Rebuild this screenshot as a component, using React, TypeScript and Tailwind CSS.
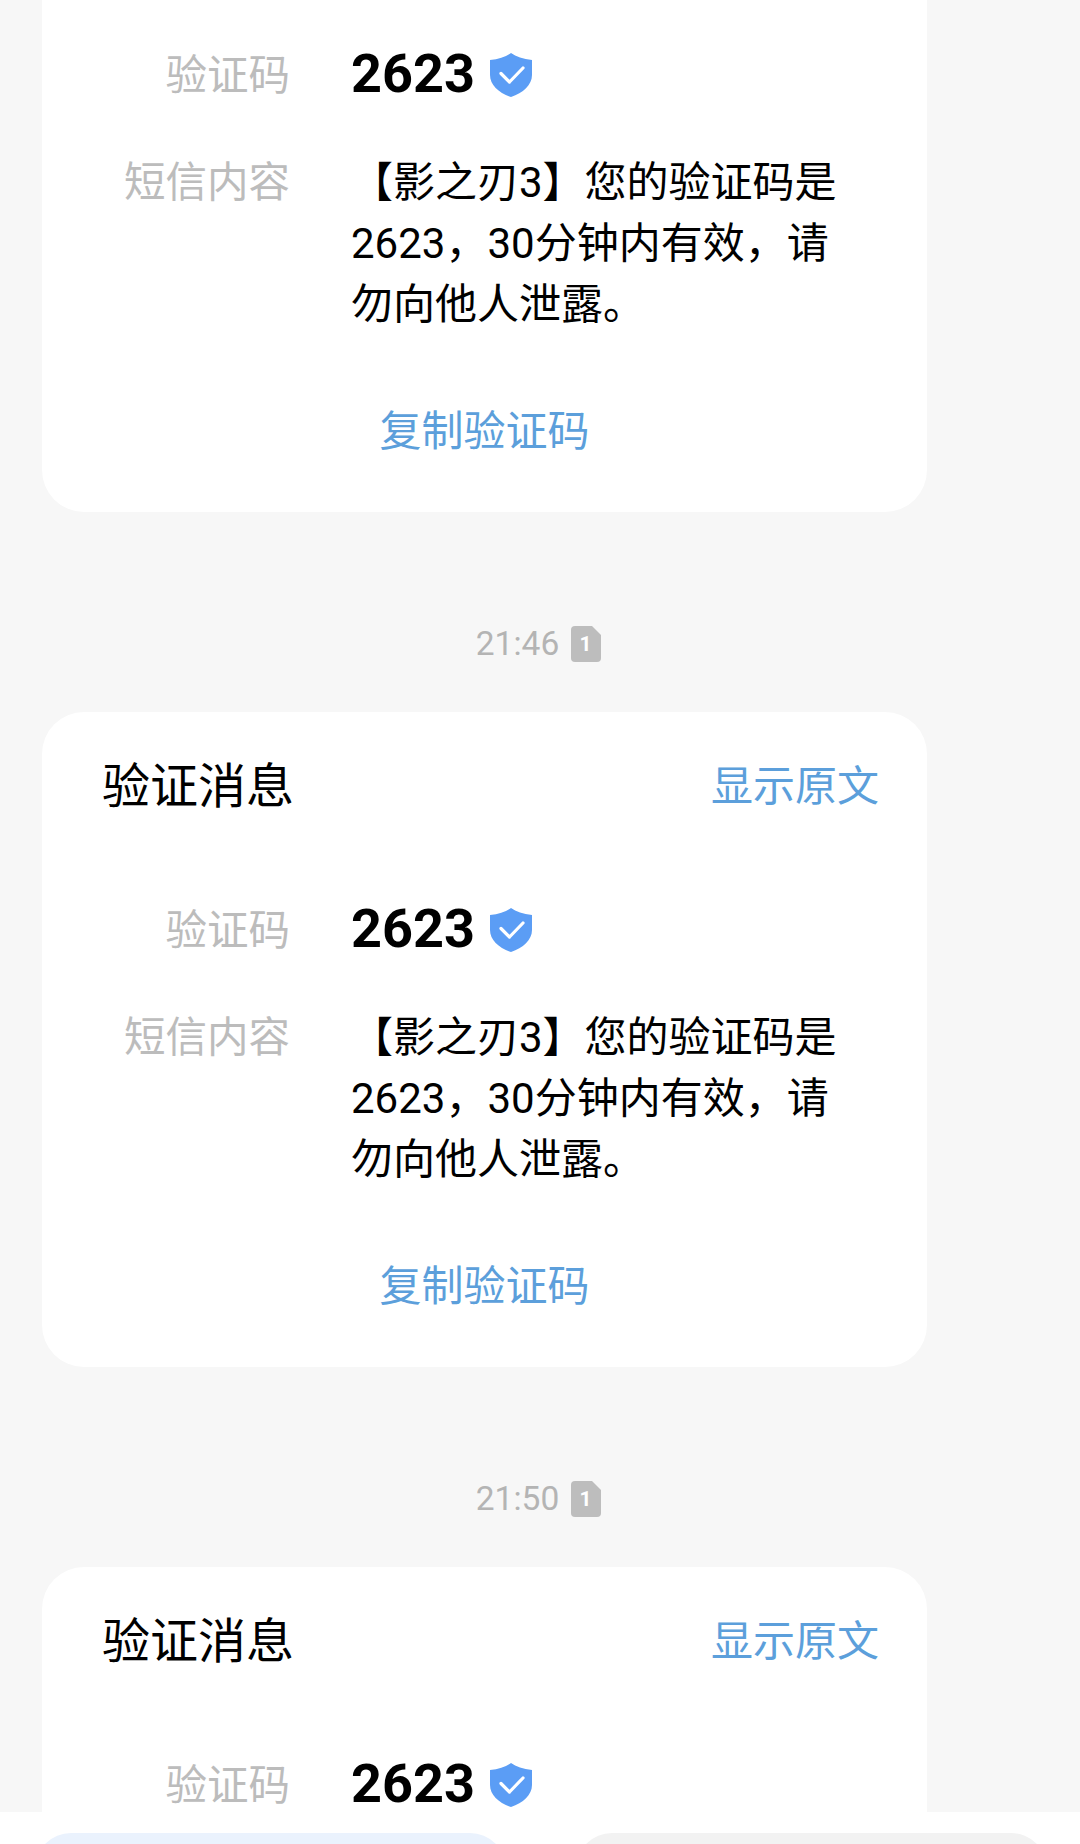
const cjk = "font-['Roboto','Noto_Sans_CJK_SC',sans-serif]";

function Shield() {
  return (
    <svg width="42" height="44" viewBox="0 0 42 44" className="shrink-0">
      <path d="M21 0 C26 3.5 33 6 42 7 V22 C42 32 33 40 21 44 C9 40 0 32 0 22 V7 C9 6 16 3.5 21 0 Z" fill="#5b9df5" />
      <path d="M11 20.5 L19.5 29 L33 15" fill="none" stroke="#ffffff" strokeWidth="3.2" strokeLinecap="round" strokeLinejoin="round" />
    </svg>
  );
}

function SimBadge() {
  return (
    <svg width="30" height="36" viewBox="0 0 30 36" className="shrink-0">
      <path d="M4 0 H21 L30 9 V32 A4 4 0 0 1 26 36 H4 A4 4 0 0 1 0 32 V4 A4 4 0 0 1 4 0 Z" fill="#bdbdbd" />
      <text x="14.5" y="25" textAnchor="middle" fontSize="21" fontWeight="700" fill="#ffffff" fontFamily="Roboto">1</text>
    </svg>
  );
}

function Card({ first }: { first?: boolean }) {
  return (
    <div className={`bg-white rounded-[42px] w-[885px] h-[655px] shrink-0 flex flex-col ${first ? "-mt-[143px]" : ""}`}>
      <div className="flex justify-between items-center h-[73px] mt-[38px] pl-[60px] pr-[48px]">
        <span className="text-[48px] text-black">验证消息</span>
        <span className="text-[42px] -mt-[1px] text-[#5c9fdb]">显示原文</span>
      </div>
      <div className="flex mt-[78px] h-[60px] items-center">
        <span className="w-[248px] text-right text-[41.5px] text-[#bcbcbc]">验证码</span>
        <span className="ml-[61px] -mt-[4px] text-[54px] leading-none font-bold text-black">2623</span>
        <span className="ml-[15px] -mt-[2px]"><Shield /></span>
      </div>
      <div className="flex mt-[46px]">
        <span className="w-[248px] text-right text-[41.5px] leading-[61px] text-[#bcbcbc]">短信内容</span>
        <p className="ml-[61px] w-[500px] text-[42px] leading-[61px] text-black">【影之刃3】您的验证码是2623，30分钟内有效，请勿向他人泄露。</p>
      </div>
      <div className="flex justify-center w-[885px] mt-[66px]">
        <span className="text-[42px] leading-[61px] text-[#5c9fdb]">复制验证码</span>
      </div>
    </div>
  );
}

function Time({ t }: { t: string }) {
  return (
    <div className="h-[200px] flex items-center justify-center gap-[12px] w-[885px] shrink-0 pl-[108px] pt-[64px] text-[33.5px] text-[#b4b4b4]">
      <span>{t}</span>
      <SimBadge />
    </div>
  );
}

export default function App() {
  return (
    <div className={`relative w-[1080px] h-[1844px] overflow-hidden bg-[#f7f7f7] ${cjk}`}>
      <div className="flex flex-col pl-[42px]">
        <Card first />
        <Time t="21:46" />
        <Card />
        <Time t="21:50" />
        <Card />
      </div>
      <div className="absolute left-0 right-0 bottom-0 h-[32px] bg-white flex justify-between pl-[35px] pr-[33px] pt-[21px]">
        <div className="w-[471px] h-[60px] rounded-t-[36px] bg-[#eaf2fd]"></div>
        <div className="w-[471px] h-[60px] rounded-t-[36px] bg-[#f2f2f2]"></div>
      </div>
    </div>
  );
}
